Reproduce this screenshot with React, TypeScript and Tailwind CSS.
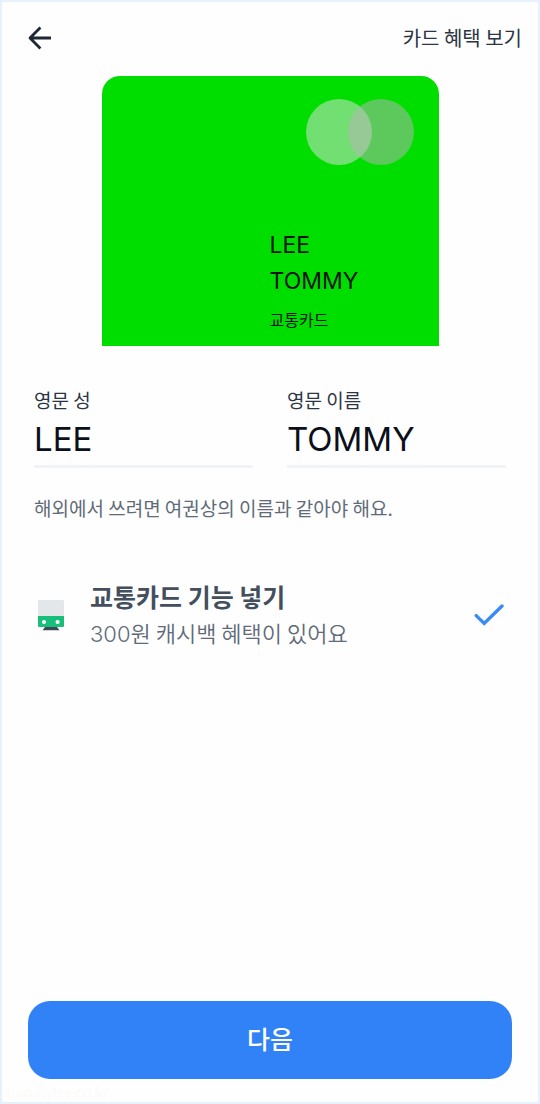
import { useState } from "react";

type NameFieldProps = {
  id: string;
  label: string;
  value: string;
  onChange: (value: string) => void;
};

function NameField({ id, label, value, onChange }: NameFieldProps) {
  return (
    <div className="flex min-w-0 flex-col">
      <label htmlFor={id} className="text-[19px] leading-7 text-[#2b3543]">
        {label}
      </label>
      <input
        id={id}
        type="text"
        value={value}
        onChange={(e) => onChange(e.target.value.toUpperCase())}
        className="h-[54px] w-full border-b-3 border-[#f2f3f6] bg-transparent pb-0.5 font-[Inter,'Noto_Sans_CJK_KR',sans-serif] text-[33px] text-[#0b0f1a] outline-none"
      />
    </div>
  );
}

function BackIcon() {
  return (
    <svg width="24" height="24" viewBox="0 0 24 24" fill="none" stroke="#1f2635" strokeWidth="2.8" aria-hidden="true">
      <path d="M12.4 1.6 2 12l10.4 10.4M2 12h21" strokeLinejoin="round" />
    </svg>
  );
}

function TrainIcon() {
  return (
    <svg width="26" height="31" viewBox="0 0 26 31" className="shrink-0" aria-hidden="true">
      <path d="M1 0h24q1 0 1 1v15H0V1q0-1 1-1z" fill="#e3e7ea" />
      <path d="M0 16h26v10q0 1-1 1H1q-1 0-1-1z" fill="#18bf7b" />
      <circle cx="6" cy="22" r="2.1" fill="#fff" />
      <circle cx="19.6" cy="22" r="2.1" fill="#fff" />
      <path d="M7 27h12l2.4 3.2H4.6z" fill="#3d4957" />
    </svg>
  );
}

function CheckIcon() {
  return (
    <svg
      width="30"
      height="24"
      viewBox="0 0 30 24"
      fill="none"
      strokeWidth="3.4"
      strokeLinecap="round"
      strokeLinejoin="miter"
      className="shrink-0 stroke-[#e3e7ea] peer-checked:stroke-[#3a8af8]"
      aria-hidden="true"
    >
      <path d="M2.2 12.6 10.2 20.4 28 3" />
    </svg>
  );
}

export default function App() {
  const [lastName, setLastName] = useState("LEE");
  const [firstName, setFirstName] = useState("TOMMY");
  const [transit, setTransit] = useState(true);

  return (
    <main className="relative flex min-h-screen flex-col border-2 border-[#e7f1fd] bg-[#fefefe] font-['Noto_Sans_CJK_KR',sans-serif]">
      <header className="flex h-[74px] items-center justify-between pr-4 pb-0.5 pl-6">
        <button type="button" aria-label="뒤로" className="p-0.5">
          <BackIcon />
        </button>
        <a href="#benefits" className="text-xl text-[#2b3543]">
          카드 혜택 보기
        </a>
      </header>

      <section className="mx-auto flex h-[270px] w-[337px] max-w-full flex-col justify-between rounded-t-[18px] bg-[#00de00] pt-[22px] pr-6 pb-[15px]">
        <svg width="110" height="68" viewBox="0 0 110 68" className="self-end" aria-hidden="true">
          <circle cx="34" cy="34" r="33" fill="#72df72" />
          <circle cx="76" cy="34" r="33" fill="#bab4ba" fillOpacity="0.5" />
        </svg>
        <div className="ml-[168px] text-[#07140a]">
          <p className="font-[Inter,sans-serif] text-[23px] leading-9">{lastName}</p>
          <p className="font-[Inter,sans-serif] text-[23px] leading-9">{firstName}</p>
          <p className="mt-2 text-base leading-6">교통카드</p>
        </div>
      </section>

      <section className="mt-10 grid grid-cols-2 gap-[34px] px-8">
        <NameField id="last-name" label="영문 성" value={lastName} onChange={setLastName} />
        <NameField id="first-name" label="영문 이름" value={firstName} onChange={setFirstName} />
      </section>
      <p className="mt-[26px] px-8 text-[19px] leading-7 text-[#5f6b79]">
        해외에서 쓰려면 여권상의 이름과 같아야 해요.
      </p>

      <label className="mt-14 flex cursor-pointer items-center pr-[34px] pl-9">
        <TrainIcon />
        <span className="ml-[26px] flex flex-1 flex-col">
          <span className="text-[25px] leading-9 font-bold text-[#434f5d]">교통카드 기능 넣기</span>
          <span className="text-[22px] leading-9 font-[350] text-[#5f6b79]">
            <span className="font-[Inter,sans-serif]">300</span>원 캐시백 혜택이 있어요
          </span>
        </span>
        <input
          type="checkbox"
          checked={transit}
          onChange={(e) => setTransit(e.target.checked)}
          className="peer sr-only"
        />
        <CheckIcon />
      </label>

      <div className="mt-auto px-[26px] pt-8 pb-[23px]">
        <button
          type="button"
          className="h-[78px] w-full rounded-[22px] bg-[#3182f7] pb-0.5 text-[25px] font-medium text-white"
        >
          다음
        </button>
      </div>
      <small className="absolute bottom-0 left-1 text-sm text-[#fbfbfb]">tommylee.co.kr</small>
    </main>
  );
}
